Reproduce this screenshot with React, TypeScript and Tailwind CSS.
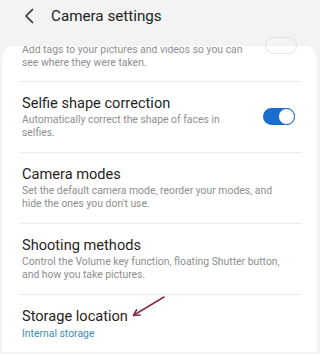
type Row = {
  title: string;
  desc?: string;
  sub?: string;
  toggle?: boolean;
};

const rows: Row[] = [
  {
    title: "Selfie shape correction",
    desc: "Automatically correct the shape of faces in selfies.",
    toggle: true,
  },
  {
    title: "Camera modes",
    desc: "Set the default camera mode, reorder your modes, and hide the ones you don't use.",
  },
  {
    title: "Shooting methods",
    desc: "Control the Volume key function, floating Shutter button, and how you take pictures.",
  },
  { title: "Storage location", sub: "Internal storage" },
];

export default function App() {
  return (
    <div
      className="relative w-[320px] h-[354px] overflow-hidden bg-[#f3f3f3] flex flex-col"
      style={{ fontFamily: "Roboto, 'Noto Sans', sans-serif" }}
    >
      <header className="h-[46px] shrink-0 flex items-start pt-[5px] pl-[24px] gap-[16px]">
        <svg width="11" height="22" viewBox="0 0 11 22">
          <path d="M8.5 4.5 L2 11 L8.5 17.5" fill="none" stroke="#333" strokeWidth="1.7" strokeLinecap="round" strokeLinejoin="round" />
        </svg>
        <h1 className="text-[15.2px] leading-[22px] text-[#222]">Camera settings</h1>
      </header>

      <div className="flex-1 overflow-hidden">
        <div className="mt-[6px] ml-[2px] mr-[3px] h-full bg-white rounded-t-[16px]">
          {/* partially scrolled-away row */}
          <div className="-mt-[8px] px-[20px]">
            <p className="text-[10.4px] leading-[12.5px] text-[#8e8e8e] w-[228px]">
              Add tags to your pictures and videos so you can see where they were taken.
            </p>
            <div className="h-px bg-[#ececec] mt-[12px] -mx-[3px] mr-[-5px]" />
          </div>

          {rows.map((r) => (
            <div key={r.title} className="px-[20px]">
              <div className="flex items-start justify-between h-[70px] pt-[12px]">
                <div className="flex flex-col">
                  <div className="text-[14.6px] leading-[19px] text-[#1f1f1f]">{r.title}</div>
                  {r.desc && (
                    <p
                      className={
                        r.toggle
                          ? "text-[10.4px] leading-[12.5px] text-[#8e8e8e] mt-[1px] w-[225px]"
                          : "text-[10.4px] leading-[12.5px] text-[#8e8e8e] mt-[1px] w-[265px]"
                      }
                    >
                      {r.desc}
                    </p>
                  )}
                  {r.sub && (
                    <p className="text-[10.4px] leading-[13px] text-[#3f8db5] mt-[1px]">{r.sub}</p>
                  )}
                </div>
                {r.toggle && (
                  <div className="mt-[14px] mr-[2px] w-[32px] h-[17px] rounded-full bg-[#1c6dd0] flex items-center justify-end">
                    <div className="size-[17px] rounded-full bg-white border-[1.5px] border-[#1c6dd0]" />
                  </div>
                )}
              </div>
              <div className="h-px bg-[#ececec] -ml-[3px] mr-[-5px]" />
            </div>
          ))}
        </div>
      </div>

      {/* off toggle of the scrolled-away row */}
      <div className="absolute left-[265px] top-[37px] w-[32px] h-[17px] rounded-full border-[1.5px] border-[#d8d8d8] opacity-70" />

      {/* annotation arrow */}
      <svg className="absolute left-[130px] top-[294px]" width="40" height="26" viewBox="0 0 40 26">
        <path d="M34 3 L4 21" stroke="#8a2b4e" strokeWidth="1.5" strokeLinecap="round" />
        <path d="M3.5 21.5 L10 21 M3.5 21.5 L6.5 15.8" stroke="#8a2b4e" strokeWidth="1.7" strokeLinecap="round" />
      </svg>
    </div>
  );
}
